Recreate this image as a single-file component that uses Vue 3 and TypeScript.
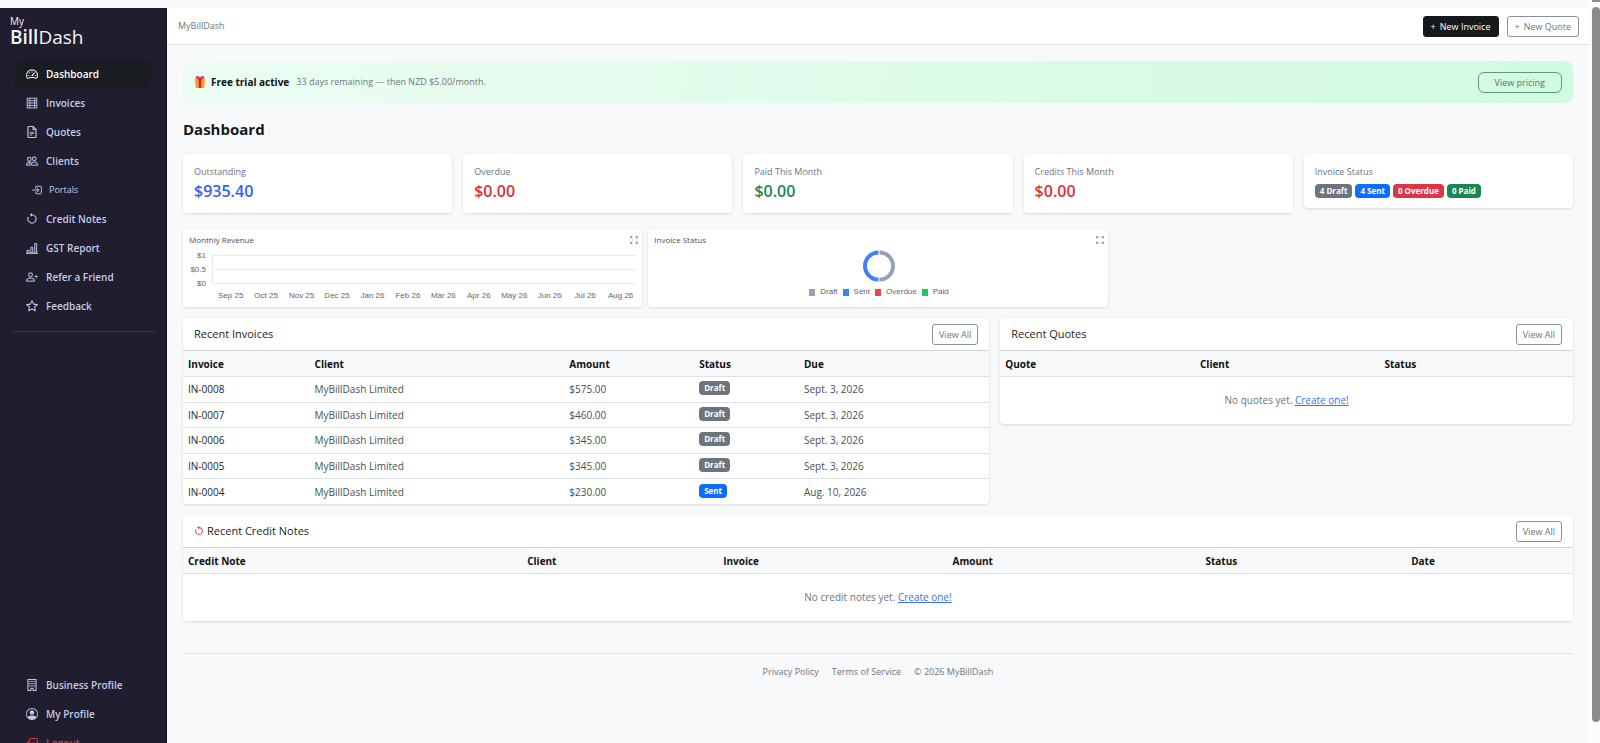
<script setup lang="ts">
interface NavItem {
  label: string
  icon: string
  active?: boolean
  sub?: boolean
  danger?: boolean
}

const icons: Record<string, string> = {
  gauge:
    '<path d="M8 4a.5.5 0 0 1 .5.5V6a.5.5 0 0 1-1 0V4.5A.5.5 0 0 1 8 4M3.732 5.732a.5.5 0 0 1 .707 0l.915.914a.5.5 0 1 1-.708.708l-.914-.915a.5.5 0 0 1 0-.707M2 10a.5.5 0 0 1 .5-.5h1.586a.5.5 0 0 1 0 1H2.5A.5.5 0 0 1 2 10m9.5 0a.5.5 0 0 1 .5-.5h1.5a.5.5 0 0 1 0 1H12a.5.5 0 0 1-.5-.5m.754-4.246a.39.39 0 0 0-.527-.02L7.547 9.31a.91.91 0 1 0 1.302 1.258l3.434-4.297a.39.39 0 0 0-.029-.518z"/><path fill-rule="evenodd" stroke="currentColor" stroke-width=".3" d="M0 10a8 8 0 1 1 15.547 2.661c-.442 1.253-1.845 1.602-2.932 1.25C11.309 13.488 9.475 13 8 13c-1.474 0-3.31.488-4.615.911-1.087.352-2.49.003-2.932-1.25A8 8 0 0 1 0 10m8-7a7 7 0 0 0-6.603 9.329c.203.575.923.876 1.68.63C4.397 12.533 6.358 12 8 12s3.604.532 4.923.96c.757.245 1.477-.056 1.68-.631A7 7 0 0 0 8 3"/>',
  invoice:
    '<g fill="none" stroke="currentColor" stroke-width="1.2"><rect x="1.6" y="1.6" width="12.8" height="13"/><path d="M5 2v12.5M5 5h9M5 8h9M5 11.200h9M11.500 2v12.500M2 5h2M2 8h2M2 11.200h2"/></g>',
  file:
    '<path d="M5 7.500h6v1H5zM5 9.500h6v1H5zM5 11.500h3.500v1H5z"/><path fill="none" stroke="currentColor" stroke-width="1.500" d="M9.500.7H4a1.400 1.400 0 0 0-1.400 1.400v11.800A1.400 1.400 0 0 0 4 15.300h8a1.400 1.400 0 0 0 1.400-1.400V4.600zM9.500.7v3.900h3.900"/>',
  people:
    '<path stroke="currentColor" stroke-width=".3" d="M15 14s1 0 1-1-1-4-5-4-5 3-5 4 1 1 1 1zm-7.978-1A.3.3 0 0 1 7 12.996c.001-.264.167-1.030.760-1.720C8.312 10.629 9.282 10 11 10c1.717 0 2.687.630 3.240 1.276.593.690.758 1.457.760 1.720l-.008.002-.014.002zM11 7a2 2 0 1 0 0-4 2 2 0 0 0 0 4m3-2a3 3 0 1 1-6 0 3 3 0 0 1 6 0M6.936 9.280a6 6 0 0 0-1.230-.247A7 7 0 0 0 5 9c-4 0-5 3-5 4q0 1 1 1h4.216A2.240 2.240 0 0 1 5 13c0-1.010.377-2.042 1.090-2.904.243-.294.526-.569.846-.816M4.920 10A5.500 5.500 0 0 0 4 13H1c0-.260.164-1.030.760-1.724.545-.636 1.492-1.256 3.160-1.275zM1.500 5.500a3 3 0 1 1 6 0 3 3 0 0 1-6 0m3-2a2 2 0 1 0 0 4 2 2 0 0 0 0-4"/>',
  enter:
    '<path fill="none" stroke="currentColor" stroke-width="1.500" stroke-linecap="round" stroke-linejoin="round" d="M6 5V3.200A1.200 1.200 0 0 1 7.200 2h6.600A1.200 1.200 0 0 1 15 3.200v9.600a1.200 1.200 0 0 1-1.200 1.200H7.200A1.200 1.200 0 0 1 6 12.800V11M1 8h10M8 5l3 3-3 3"/>',
  undo:
    '<path fill-rule="evenodd" stroke="currentColor" stroke-width=".4" d="M8 3a5 5 0 1 1-4.546 2.914.5.5 0 0 0-.908-.417A6 6 0 1 0 8 2z"/><path d="M8 4.466V.534a.25.25 0 0 0-.410-.192L5.230 2.308a.25.25 0 0 0 0 .384l2.360 1.966A.25.25 0 0 0 8 4.466"/>',
  bars:
    '<path fill="none" stroke="currentColor" stroke-width="1.300" d="M1.500 11h2.500v4H1.500zM6.500 7H9v8H6.500zM11.700 2h2.500v13h-2.500zM0 15h16"/>',
  invite:
    '<path stroke="currentColor" stroke-width=".3" d="M6 8a3 3 0 1 0 0-6 3 3 0 0 0 0 6m2-3a2 2 0 1 1-4 0 2 2 0 0 1 4 0m4 8c0 1-1 1-1 1H1s-1 0-1-1 1-4 6-4 6 3 6 4m-1-.004c-.001-.246-.154-.986-.832-1.664C9.516 10.680 8.289 10 6 10s-3.516.680-4.168 1.332c-.678.678-.830 1.418-.832 1.664z"/><path d="M13.500 5a.5.5 0 0 1 .5.5V7h1.500a.5.5 0 0 1 0 1H14v1.500a.5.5 0 0 1-1 0V8h-1.500a.5.5 0 0 1 0-1H13V5.500a.5.5 0 0 1 .5-.5"/>',
  star:
    '<path fill="none" stroke="currentColor" stroke-width="1.400" stroke-linejoin="round" d="m8 1 2.150 4.500 4.950.650-3.620 3.420.9 4.900L8 12.100l-4.380 2.370.9-4.900L.9 6.150l4.950-.65z"/>',
  building:
    '<path fill="none" stroke="currentColor" stroke-width="1.400" d="M2.600.6h10.800v14.800H9.500v-3h-3v3H2.600z"/><path d="M4.300 2.500H6V4H4.300zM7.100 2.500h1.800V4H7.100zM10 2.500h1.700V4H10zM4.300 5.200H6V7H4.300zM7.100 5.200h1.800V7H7.100zM10 5.200h1.700V7H10zM4.300 8.200H6V10H4.300zM7.100 8.200h1.800V10H7.100zM10 8.200h1.700V10H10z"/>',
  person:
    '<path d="M11 6a3 3 0 1 1-6 0 3 3 0 0 1 6 0"/><path fill-rule="evenodd" stroke="currentColor" stroke-width=".3" d="M0 8a8 8 0 1 1 16 0A8 8 0 0 1 0 8m8-7a7 7 0 0 0-5.468 11.370C3.242 11.226 4.805 10 8 10s4.757 1.225 5.468 2.370A7 7 0 0 0 8 1"/>',
  leave:
    '<path fill="none" stroke="currentColor" stroke-width="1.400" stroke-linecap="round" stroke-linejoin="round" d="M5 5V3.200A1.200 1.200 0 0 1 6.200 2h7.600A1.200 1.200 0 0 1 15 3.200v9.600a1.200 1.200 0 0 1-1.200 1.200H6.200A1.200 1.200 0 0 1 5 12.800V11M11 8H1M4 5 1 8l3 3"/>',
}

const mainNav: NavItem[] = [
  { label: 'Dashboard', icon: 'gauge', active: true },
  { label: 'Invoices', icon: 'invoice' },
  { label: 'Quotes', icon: 'file' },
  { label: 'Clients', icon: 'people' },
  { label: 'Portals', icon: 'enter', sub: true },
  { label: 'Credit Notes', icon: 'undo' },
  { label: 'GST Report', icon: 'bars' },
  { label: 'Refer a Friend', icon: 'invite' },
  { label: 'Feedback', icon: 'star' },
]
const accountNav: NavItem[] = [
  { label: 'Business Profile', icon: 'building' },
  { label: 'My Profile', icon: 'person' },
  { label: 'Logout', icon: 'leave', danger: true },
]

const stats = [
  { label: 'Outstanding', value: '$935.40', tone: 'blue' },
  { label: 'Overdue', value: '$0.00', tone: 'red' },
  { label: 'Paid This Month', value: '$0.00', tone: 'green' },
  { label: 'Credits This Month', value: '$0.00', tone: 'red' },
]
const statusBadges = [
  { label: '4 Draft', tone: 'draft' },
  { label: '4 Sent', tone: 'sent' },
  { label: '0 Overdue', tone: 'overdue' },
  { label: '0 Paid', tone: 'paid' },
]
const months = ['Sep 25', 'Oct 25', 'Nov 25', 'Dec 25', 'Jan 26', 'Feb 26', 'Mar 26', 'Apr 26', 'May 26', 'Jun 26', 'Jul 26', 'Aug 26']
const legend = [
  { label: 'Draft', tone: 'k-draft' },
  { label: 'Sent', tone: 'k-sent' },
  { label: 'Overdue', tone: 'k-overdue' },
  { label: 'Paid', tone: 'k-paid' },
]
const invoices = [
  { id: 'IN-0008', amount: '$575.00', status: 'Draft', due: 'Sept. 3, 2026' },
  { id: 'IN-0007', amount: '$460.00', status: 'Draft', due: 'Sept. 3, 2026' },
  { id: 'IN-0006', amount: '$345.00', status: 'Draft', due: 'Sept. 3, 2026' },
  { id: 'IN-0005', amount: '$345.00', status: 'Draft', due: 'Sept. 3, 2026' },
  { id: 'IN-0004', amount: '$230.00', status: 'Sent', due: 'Aug. 10, 2026' },
]
const creditColumns = ['Credit Note', 'Client', 'Invoice', 'Amount', 'Status', 'Date']
</script>

<template>
  <div class="page">
    <aside class="sidebar">
      <a class="brand" href="#"><span class="brand-my">My</span><span class="brand-name"><b>Bill</b>Dash</span></a>
      <nav class="nav" aria-label="Main">
        <a v-for="n in mainNav" :key="n.label" href="#" class="nav-item" :class="{ active: n.active, sub: n.sub }">
          <svg viewBox="0 0 16 16" fill="currentColor" aria-hidden="true" v-html="icons[n.icon]"></svg>{{ n.label }}
        </a>
      </nav>
      <hr class="nav-rule" />
      <nav class="nav account" aria-label="Account">
        <a v-for="n in accountNav" :key="n.label" href="#" class="nav-item" :class="{ danger: n.danger }">
          <svg viewBox="0 0 16 16" fill="currentColor" aria-hidden="true" v-html="icons[n.icon]"></svg>{{ n.label }}
        </a>
      </nav>
    </aside>

    <div class="main">
      <header class="topbar">
        <span class="crumb">MyBillDash</span>
        <div class="actions">
          <button type="button" class="btn dark"><span class="plus">+</span>New Invoice</button>
          <button type="button" class="btn outline"><span class="plus">+</span>New Quote</button>
        </div>
      </header>

      <main class="content">
        <section class="banner">
          <svg class="gift" viewBox="0 0 16 16" aria-hidden="true">
            <path fill="#f5a623" d="M1 4h14v4H1zM2 8h12v8H2z" />
            <path fill="#d98a1b" d="M2 8h12v1H2z" />
            <path fill="#d3223b" d="M6.300 4h3.400v12H6.300z" />
            <path fill="none" stroke="#d3223b" stroke-width="1.800" d="M8 4C6 0 2.500 0 3.500 3c.5 1 3 1 4.500 1 1.500 0 4 0 4.500-1C13.500 0 10 0 8 4" />
          </svg>
          <strong>Free trial active</strong>
          <span class="banner-note">33 days remaining — then NZD $5.00/month.</span>
          <button type="button" class="btn pricing">View pricing</button>
        </section>

        <h1>Dashboard</h1>

        <section class="stats">
          <article v-for="s in stats" :key="s.label" class="card stat">
            <div class="stat-label">{{ s.label }}</div>
            <div class="stat-value" :class="s.tone">{{ s.value }}</div>
          </article>
          <article class="card stat">
            <div class="stat-label">Invoice Status</div>
            <div class="badges">
              <span v-for="b in statusBadges" :key="b.label" class="badge" :class="b.tone">{{ b.label }}</span>
            </div>
          </article>
        </section>

        <section class="charts">
          <article class="card chart">
            <header class="chart-head">
              <h2>Monthly Revenue</h2>
              <button type="button" class="expand" aria-label="Expand Monthly Revenue">
                <svg viewBox="0 0 16 16" aria-hidden="true"><path d="M1 5V1h4M11 1h4v4M15 11v4h-4M5 15H1v-4M2 2l3 3M14 2l-3 3M14 14l-3-3M2 14l3-3" /></svg>
              </button>
            </header>
            <div class="plot">
              <div class="y-axis"><span>$1</span><span>$0.5</span><span>$0</span></div>
              <div class="plot-area"><i></i><i></i></div>
            </div>
            <div class="x-axis"><span v-for="m in months" :key="m">{{ m }}</span></div>
          </article>
          <article class="card chart">
            <header class="chart-head">
              <h2>Invoice Status</h2>
              <button type="button" class="expand" aria-label="Expand Invoice Status">
                <svg viewBox="0 0 16 16" aria-hidden="true"><path d="M1 5V1h4M11 1h4v4M15 11v4h-4M5 15H1v-4M2 2l3 3M14 2l-3 3M14 14l-3-3M2 14l3-3" /></svg>
              </button>
            </header>
            <svg class="donut" viewBox="0 0 32 32" role="img" aria-label="Half draft, half sent">
              <path stroke="#94a3b8" d="M16.500 2.500a13.500 13.500 0 0 1 0 27" />
              <path stroke="#3b82f6" d="M15.500 2.500a13.500 13.500 0 0 0 0 27" />
            </svg>
            <div class="legend">
              <span v-for="l in legend" :key="l.label"><i :class="l.tone"></i>{{ l.label }}</span>
            </div>
          </article>
        </section>

        <section class="lists">
          <article class="card list invoices">
            <header class="list-head">
              <h2>Recent Invoices</h2>
              <button type="button" class="btn outline">View All</button>
            </header>
            <table class="rows">
              <colgroup><col class="i1" /><col class="i2" /><col class="i3" /><col class="i4" /><col /></colgroup>
              <thead>
                <tr><th>Invoice</th><th>Client</th><th>Amount</th><th>Status</th><th>Due</th></tr>
              </thead>
              <tbody>
                <tr v-for="r in invoices" :key="r.id">
                  <td class="strong">{{ r.id }}</td>
                  <td>MyBillDash Limited</td>
                  <td>{{ r.amount }}</td>
                  <td><span class="badge" :class="r.status.toLowerCase()">{{ r.status }}</span></td>
                  <td>{{ r.due }}</td>
                </tr>
              </tbody>
            </table>
          </article>
          <article class="card list quotes">
            <header class="list-head">
              <h2>Recent Quotes</h2>
              <button type="button" class="btn outline">View All</button>
            </header>
            <table>
              <colgroup><col class="q1" /><col class="q2" /><col /></colgroup>
              <thead><tr><th>Quote</th><th>Client</th><th>Status</th></tr></thead>
              <tbody><tr><td colspan="3" class="empty">No quotes yet. <a href="#">Create one!</a></td></tr></tbody>
            </table>
          </article>
          <article class="card list credits">
            <header class="list-head">
              <h2><svg class="red-icon" viewBox="0 0 16 16" fill="currentColor" aria-hidden="true" v-html="icons.undo"></svg>Recent Credit Notes</h2>
              <button type="button" class="btn outline">View All</button>
            </header>
            <table>
              <colgroup><col class="c1" /><col class="c2" /><col class="c3" /><col class="c4" /><col class="c5" /><col /></colgroup>
              <thead><tr><th v-for="c in creditColumns" :key="c">{{ c }}</th></tr></thead>
              <tbody><tr><td colspan="6" class="empty">No credit notes yet. <a href="#">Create one!</a></td></tr></tbody>
            </table>
          </article>
        </section>

        <footer class="footer">
          <a href="#">Privacy Policy</a><a href="#">Terms of Service</a><span>© 2026 MyBillDash</span>
        </footer>
      </main>
    </div>
    <div class="scroll" aria-hidden="true"><i class="cap"></i><i class="thumb"></i></div>
  </div>
</template>

<style>
body {
  background: #f8f9fb;
  overflow: hidden;
}
</style>

<style scoped>
* {
  box-sizing: border-box;
}
.page {
  display: flex;
  height: 100vh;
  overflow: hidden;
  color: #212529;
  font-family: "Open Sans", "Noto Sans", sans-serif;
  font-size: 10px;
  line-height: 16px;
}
a {
  color: inherit;
  text-decoration: none;
}
.sidebar {
  display: flex;
  flex-direction: column;
  flex: 0 0 167px;
  height: calc(100vh + 6px);
  margin-top: 8px;
  padding-top: 7px;
  background: #1f1d2e;
  border-right: 1px solid #14121f;
}
.brand {
  display: flex;
  flex-direction: column;
  height: 44px;
  padding-left: 10px;
  color: #f4f4f8;
}
.brand-my {
  font-size: 10px;
  line-height: 13px;
}
.brand-name {
  font-size: 19px;
  line-height: 18px;
}
.brand-name b {
  font-weight: 600;
}
.nav {
  display: flex;
  flex-direction: column;
  padding: 0 15px;
}
.account {
  margin-top: auto;
}
.nav-item {
  display: flex;
  align-items: center;
  gap: 8px;
  height: 29px;
  padding-left: 11px;
  border-radius: 6px;
  color: #c3cbe8;
  font-weight: 600;
  font-size: 10px;
}
.nav-item svg {
  width: 12px;
  height: 12px;
}
.nav-item.active {
  color: #fff;
  background: #191c20;
}
.nav-item.sub {
  padding-left: 17px;
  gap: 7px;
  font-size: 9px;
  font-weight: 500;
}
.nav-item.sub svg {
  width: 10px;
  height: 10px;
}
.nav-item.danger {
  color: #dc3545;
}
.nav-rule {
  width: 144px;
  margin: 11px 0 0 12px;
  border: 0;
  border-top: 1px solid #34324a;
}
.main {
  flex: 1;
  min-width: 0;
  margin-top: 8px;
}
.topbar {
  display: flex;
  align-items: center;
  justify-content: space-between;
  height: 37px;
  padding: 0 10px 0 11px;
  background: #fff;
  border-bottom: 1px solid #dee2e6;
}
.crumb {
  color: #6c757d;
  font-size: 9px;
}
.actions {
  display: flex;
  gap: 8px;
}
.btn {
  height: 21px;
  padding: 0 6px;
  border: 1px solid #8a9198;
  border-radius: 3px;
  background: transparent;
  color: #6c757d;
  font-family: inherit;
  font-size: 9px;
  line-height: 19px;
  white-space: nowrap;
}
.actions .btn {
  padding: 0 7px;
}
.plus {
  margin-right: 4px;
}
.btn.dark {
  border-color: #16191c;
  background: #16191c;
  color: #fff;
  font-weight: 500;
}
.btn.pricing {
  margin-left: auto;
  padding: 0 16px;
  border-color: #5c9a80;
  border-radius: 6px;
  color: #41806a;
}
.content {
  padding: 16px 16px 0;
}
.banner {
  display: flex;
  align-items: center;
  height: 42px;
  padding: 0 11px;
  border-radius: 8px;
  background: linear-gradient(100deg, #ecfdf3, #d1fae1);
}
.gift {
  width: 12px;
  height: 12px;
  margin-right: 5px;
}
.banner strong {
  color: #111;
  font-weight: 700;
}
.banner-note {
  margin-left: 7px;
  color: #6c757d;
  font-size: 9px;
}
h1 {
  margin: 16px 0 15px;
  font-size: 15px;
  line-height: 20px;
  font-weight: 700;
  color: #16191c;
}
h2 {
  margin: 0;
  font-weight: 500;
}
.card {
  min-width: 0;
  background: #fff;
  border-radius: 4px;
  box-shadow: 0 1px 3px rgba(0, 0, 0, 0.12);
}
.stats {
  display: grid;
  grid-template-columns: repeat(5, 1fr);
  gap: 11px;
  align-items: start;
}
.stat {
  padding: 10px 11px;
}
.stat-label {
  color: #6c757d;
  font-size: 9px;
}
.stat-value {
  font-size: 16px;
  line-height: 23px;
  font-weight: 600;
}
.blue { color: #2f62f0; }
.red { color: #dc3038; }
.green { color: #198754; }
.badges {
  display: flex;
  gap: 3px;
  padding: 4px 0 0;
}
.badge {
  display: inline-block;
  padding: 0 5px;
  border-radius: 4px;
  color: #fff;
  font-size: 8px;
  line-height: 14px;
  font-weight: 700;
}
td .badge {
  vertical-align: 2px;
}
.draft { background: #6c757d; }
.sent { background: #0d6efd; }
.overdue { background: #dc3545; }
.paid { background: #198754; }
.charts {
  display: grid;
  grid-template-columns: repeat(3, 1fr);
  gap: 6px;
  margin-top: 16px;
}
.chart {
  display: flex;
  flex-direction: column;
  height: 78px;
  padding: 3px 4px 3px 6px;
}
.chart-head {
  display: flex;
  align-items: center;
  justify-content: space-between;
  height: 16px;
}
.chart-head h2 {
  color: #495057;
  font-size: 8px;
}
.expand {
  display: flex;
  padding: 0;
  border: 0;
  background: none;
}
.expand svg {
  width: 8px;
  height: 8px;
  fill: none;
  stroke: #7d858c;
  stroke-width: 1.5;
}
.plot {
  display: flex;
  margin-top: 1px;
  gap: 3px;
}
.y-axis {
  display: flex;
  flex-direction: column;
  width: 17px;
  color: #666;
  font: 8px/14px "Liberation Sans", Arial, sans-serif;
  text-align: right;
}
.plot-area {
  display: flex;
  flex-direction: column;
  flex: 1;
  height: 29px;
  margin: 6px 2px 0 3px;
  border: solid #e9e9e9;
  border-width: 1px 0 1px 1px;
}
.plot-area i {
  flex: 1;
}
.plot-area i + i {
  border-top: 1px solid #ededed;
}
.x-axis {
  display: grid;
  grid-template-columns: repeat(12, 1fr);
  padding-left: 24px;
  color: #666;
  font: 8px/10px "Liberation Sans", Arial, sans-serif;
  text-align: center;
  white-space: nowrap;
}
.donut {
  width: 32px;
  height: 32px;
  margin: 2px auto 0;
  fill: none;
  stroke-width: 4;
}
.legend {
  display: flex;
  justify-content: center;
  gap: 5px;
  margin-top: 4px;
  color: #666;
  font: 8px/12px "Liberation Sans", Arial, sans-serif;
}
.legend span {
  display: flex;
  align-items: center;
  gap: 5px;
}
.legend i {
  width: 6px;
  height: 7px;
}
.k-draft { background: #94a3b8; }
.k-sent { background: #3b82f6; }
.k-overdue { background: #ef4444; }
.k-paid { background: #22c55e; }
.lists {
  display: grid;
  grid-template-columns: repeat(12, 1fr);
  gap: 11px;
  align-items: start;
  margin-top: 11px;
}
.invoices { grid-column: span 7; }
.quotes { grid-column: span 5; }
.credits { grid-column: span 12; }
.list-head {
  display: flex;
  align-items: center;
  justify-content: space-between;
  height: 32px;
  padding: 0 11px;
}
.list-head h2 {
  display: flex;
  align-items: center;
  gap: 3px;
  font-size: 11px;
}
.red-icon {
  width: 10px;
  height: 10px;
  color: #dc3545;
}
table {
  width: 100%;
  border-collapse: collapse;
  table-layout: fixed;
}
.rows {
  height: 154px;
}
th,
td {
  height: 25px;
  padding: 0 5px;
  text-align: left;
  border-bottom: 1px solid #dee2e6;
}
th {
  height: 26px;
  background: #f8f9fb;
  border-top: 1px solid #cfd4d9;
  color: #111;
  font-weight: 700;
}
td {
  color: #495057;
}
.strong {
  color: #212529;
}
tbody tr:last-child td {
  border-bottom: 0;
}
.i1 { width: 15.7%; }
.i2 { width: 31.6%; }
.i3 { width: 16.1%; }
.i4 { width: 13%; }
.q1 { width: 34%; }
.q2 { width: 32.2%; }
.c1 { width: 24.4%; }
.c2 { width: 14.1%; }
.c3 { width: 16.5%; }
.c4 { width: 18.2%; }
.c5 { width: 14.8%; }
.empty {
  height: 47px;
  color: #6c757d;
  text-align: center;
}
.empty a {
  color: #3d6ef5;
  text-decoration: underline;
}
.footer {
  display: flex;
  justify-content: center;
  gap: 13px;
  margin-top: 32px;
  padding-top: 10px;
  border-top: 1px solid #dee2e6;
  color: #6c757d;
  font-size: 9px;
}
.scroll {
  display: flex;
  flex-direction: column;
  flex: 0 0 11px;
  gap: 5px;
  padding-left: 3px;
  background: #fcfcfd;
}
.cap {
  height: 2px;
  background: #8b8b8b;
}
.thumb {
  height: calc(100vh - 28px);
  border-radius: 4px;
  background: #8b8b8b;
}
</style>
